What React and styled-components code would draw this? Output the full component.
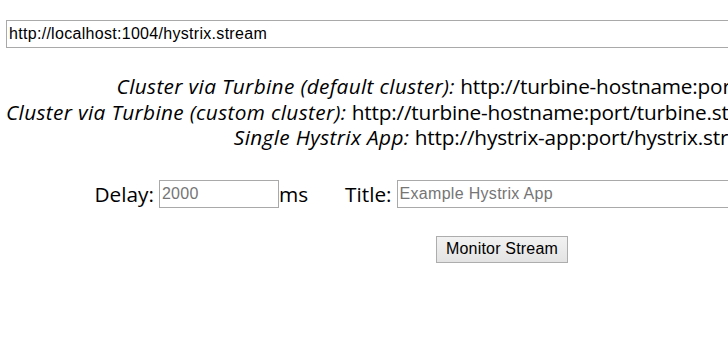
import styled, { createGlobalStyle } from 'styled-components'

const GlobalStyle = createGlobalStyle`
    html, body {
        margin: 0;
        padding: 0;
        background: #ffffff;
        overflow: hidden;
    }
`

const Container = styled.div`
    width: 1004px;
    padding-top: 20px;
    text-align: center;
    color: #000000;
    font-family: "Open Sans", "Noto Sans", sans-serif;
    font-size: 20.8px;
`

const Field = styled.input`
    box-sizing: border-box;
    width: ${props => props.$width}px;
    height: 28px;
    margin: 0;
    padding: 1px 2px;
    border: 1px solid #a9a9a9;
    font-family: "Liberation Sans", Arial, sans-serif;
    font-size: 16px;
    letter-spacing: 0.3px;
    color: #000000;
    outline: none;

    &::placeholder {
        color: #757575;
    }
`

const StreamField = styled(Field)`
    display: block;
    margin: 0 auto;
`

const Hints = styled.div`
    margin-top: 26px;
    line-height: 25.5px;
`

const Hint = styled.div`
    white-space: nowrap;
`

const Label = styled.i`
    font-style: italic;
    letter-spacing: 0.35px;
`

const Url = styled.span`
    letter-spacing: -0.2px;
`

const Row = styled.div`
    margin-top: 29px;
    display: flex;
    justify-content: center;
    align-items: center;
    line-height: 28px;
    white-space: nowrap;
`

const Text = styled.span`
    margin-right: ${props => props.$gap || 0}px;
`

const Actions = styled.div`
    margin-top: 28px;
    display: flex;
    justify-content: center;
`

const Button = styled.button`
    box-sizing: border-box;
    height: 27px;
    padding: 0 9px;
    border: 1px solid #adadad;
    border-radius: 0;
    background: linear-gradient(#f2f2f2, #e3e3e3);
    font-family: "Liberation Sans", Arial, sans-serif;
    font-size: 16px;
    letter-spacing: 0.2px;
    color: #000000;
`

const hints = [
    ['Cluster via Turbine (default cluster):', 'http://turbine-hostname:port/turbine.stream'],
    ['Cluster via Turbine (custom cluster):', 'http://turbine-hostname:port/turbine.stream?cluster=[clusterName]'],
    ['Single Hystrix App:', 'http://hystrix-app:port/hystrix.stream'],
]

const App = () => {
    return (
        <Container>
            <GlobalStyle />
            <StreamField $width={992} type="text" defaultValue="http://localhost:1004/hystrix.stream" />
            <Hints>
                {hints.map(([label, url]) => (
                    <Hint key={label}><Label>{label}</Label> <Url>{url}</Url></Hint>
                ))}
            </Hints>
            <Row>
                <Text $gap={5}>Delay:</Text>
                <Field $width={120} type="text" placeholder="2000" />
                <Text $gap={37}>ms</Text>
                <Text $gap={5}>Title:</Text>
                <Field $width={513} type="text" placeholder="Example Hystrix App" />
            </Row>
            <Actions>
                <Button>Monitor Stream</Button>
            </Actions>
        </Container>
    )
}

export default App
